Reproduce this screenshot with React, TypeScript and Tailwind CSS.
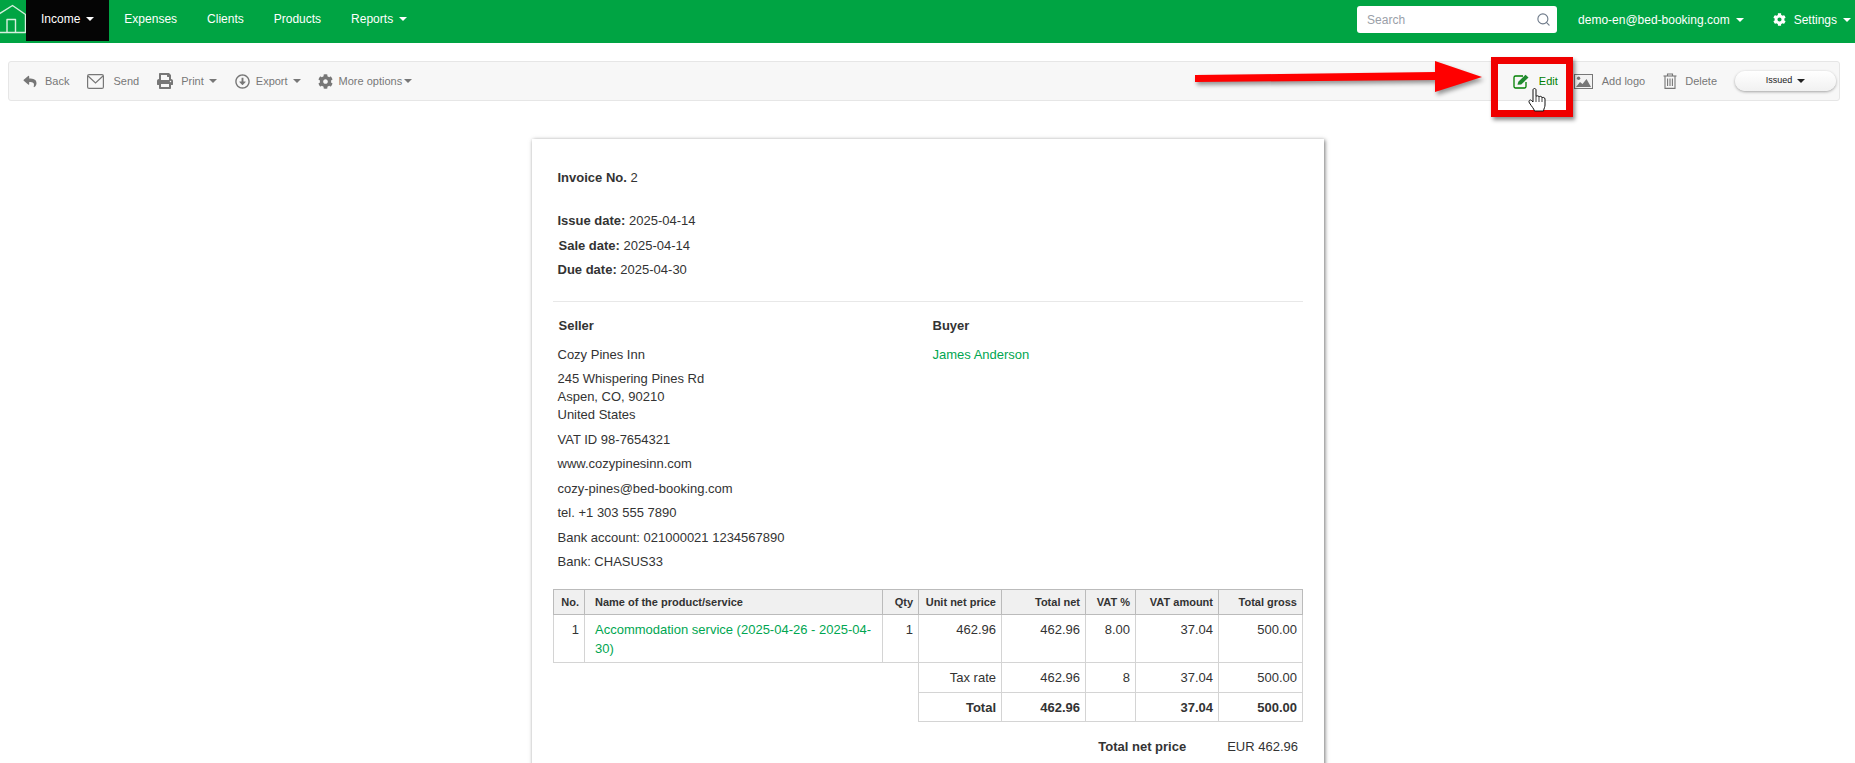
import React from "react";
import { FaReply, FaPrint, FaCog, FaRegArrowAltCircleDown } from "react-icons/fa";
import { Search } from "lucide-react";

function Caret({ className = "" }: { className?: string }) {
  return <span className={`inline-block w-0 h-0 border-x-[4px] border-x-transparent border-t-[4px] ${className}`} />;
}

function HomeIcon() {
  return (
    <svg viewBox="0 0 26 30" className="w-[26px] h-[30px] mt-[4px] shrink-0" fill="none" stroke="#d6f0df" strokeWidth="1.4" strokeLinejoin="round">
      <path d="M-1 10 L12.5 1.5 L25.5 10.5 V28.5 H-1" />
      <path d="M7 28.5 V15.5 H15.5 V28.5" />
    </svg>
  );
}

function NavItem({ label, caret }: { label: string; caret?: boolean }) {
  return (
    <div className="flex items-center h-[37px] px-[15px] text-white">
      <span>{label}</span>
      {caret && <Caret className="ml-[6px] border-t-white" />}
    </div>
  );
}

function EnvelopeIcon() {
  return (
    <svg viewBox="0 0 17 15" className="w-[17px] h-[15px]" fill="none" stroke="#777" strokeWidth="1.2">
      <rect x="0.6" y="0.6" width="15.8" height="13.8" rx="1.5" />
      <path d="M1 2 L8.5 9 L16 2" />
    </svg>
  );
}

function EditIcon() {
  return (
    <svg viewBox="0 0 18 15" className="w-[18px] h-[15px]">
      <path d="M13 8 V12.5 A1.5 1.5 0 0 1 11.5 14 H2.5 A1.5 1.5 0 0 1 1 12.5 V3.5 A1.5 1.5 0 0 1 2.5 2 H10" fill="none" stroke="#008000" strokeWidth="1.3" />
      <path d="M4.5 10.8 L5.3 7.7 L12.5 0.8 L15.5 3.6 L8.2 10.4 Z" fill="#1f8a2e" />
    </svg>
  );
}

function ImageIcon() {
  return (
    <svg viewBox="0 0 19 15" className="w-[19px] h-[15px]">
      <rect x="0.5" y="0.5" width="18" height="14" fill="#f3f3f3" stroke="#777" />
      <circle cx="4.6" cy="4.2" r="1.7" fill="#777" />
      <path d="M2 13 L6 8 L8.5 10 L12.5 5 L17 13 Z" fill="#777" />
    </svg>
  );
}

function TrashIcon() {
  return (
    <svg viewBox="0 0 14 16" className="w-[14px] h-[16px]" fill="none" stroke="#777" strokeWidth="1.1">
      <path d="M0.5 3 H13.5" />
      <path d="M4.5 3 V1 H9.5 V3" />
      <path d="M2 3 V15.4 H12 V3" />
      <path d="M4.6 5.5 V13 M7 5.5 V13 M9.4 5.5 V13" />
    </svg>
  );
}

function Tool({ icon, label, caret, ml, gap }: { icon: React.ReactNode; label: string; caret?: boolean; ml: string; gap: string }) {
  return (
    <div className={`flex items-center ${ml}`}>
      <span className={`flex items-center ${gap}`}>{icon}</span>
      <span>{label}</span>
      {caret && <Caret className={`${label === "More options" ? "ml-[2px]" : "ml-[5px]"} border-t-[#777]`} />}
    </div>
  );
}

const th = "border border-[#bbbbbb] bg-[#f0f0f0] text-[11px] font-bold text-right pl-[5px] pr-[5px] h-[25px] leading-[14px] align-middle whitespace-nowrap";
const td = "border border-[#d4d4d4] text-right pl-[5px] pr-[5px] align-top pt-[5px] leading-[19px]";
const foot = "border border-[#d4d4d4] text-right pl-[5px] pr-[5px] align-middle leading-[19px]";

export default function App() {
  return (
    <div className="relative h-[763px] overflow-hidden bg-white font-['Liberation_Sans',Arial,sans-serif] text-[13px] text-[#333333]">
      <nav className="flex h-[43px] items-start bg-[#00a443] text-[12px]">
        <HomeIcon />
        <div className="bg-[#050505] h-[41px] flex">
          <div className="flex items-center h-[37px] pl-[15px] pr-[15px] text-white">
            <span>Income</span>
            <Caret className="ml-[6px] border-t-white" />
          </div>
        </div>
        <NavItem label="Expenses" />
        <NavItem label="Clients" />
        <NavItem label="Products" />
        <NavItem label="Reports" caret />
        <div className="ml-auto flex items-center h-[39px] text-white">
          <div className="relative w-[200px] h-[27px] bg-white rounded-[3px] flex items-center pl-[10px] text-[12px] text-[#9aa0a8]">
            Search
            <Search size={15} strokeWidth={1.8} className="absolute right-[6px] top-[6px] text-[#6f7b8a]" />
          </div>
          <span className="ml-[21px]">demo-en@bed-booking.com</span>
          <Caret className="ml-[6px] border-t-white" />
          <FaCog className="ml-[29px] w-[13px] h-[13px]" />
          <span className="ml-[8px]">Settings</span>
          <Caret className="ml-[6px] mr-[4px] border-t-white" />
        </div>
      </nav>

      <div className="mx-[8px] mt-[18px] mr-[15px] h-[40px] flex items-center bg-[#f7f7f7] border border-[#e6e6e6] rounded-[3px] text-[11px] text-[#777777]">
        <Tool ml="ml-[14px]" gap="mr-[8px]" icon={<FaReply className="w-[14px] h-[13px]" />} label="Back" />
        <Tool ml="ml-[18px]" gap="mr-[9px]" icon={<EnvelopeIcon />} label="Send" />
        <Tool ml="ml-[18px]" gap="mr-[8px]" icon={<FaPrint className="w-[16px] h-[16px]" />} label="Print" caret />
        <Tool ml="ml-[18px]" gap="mr-[6px]" icon={<FaRegArrowAltCircleDown className="w-[15px] h-[15px]" />} label="Export" caret />
        <Tool ml="ml-[17px]" gap="mr-[6px]" icon={<FaCog className="w-[15px] h-[15px]" />} label="More options" caret />
        <div className="ml-auto flex items-center text-[#008000]">
          <EditIcon />
          <span className="ml-[8px]">Edit</span>
        </div>
        <Tool ml="ml-[16px]" gap="mr-[9px]" icon={<ImageIcon />} label="Add logo" />
        <Tool ml="ml-[18px]" gap="mr-[8px]" icon={<TrashIcon />} label="Delete" />
        <div className="ml-[18px] mr-[3px] w-[101px] h-[20px] rounded-full bg-gradient-to-b from-white to-[#f1f1f1] shadow-[0_1px_3px_rgba(0,0,0,0.35)] flex items-center justify-center text-[9px] text-[#222222]">
          Issued
          <Caret className="ml-[5px] border-t-[#222222]" />
        </div>
      </div>

      <div className="ml-[532px] mt-[38px] w-[792px] min-h-[700px] bg-white px-[21px] pt-[29px] shadow-[1px_1px_4px_rgba(0,0,0,0.55)]">
        <div className="ml-[4.5px] leading-[19px]"><b>Invoice No.</b> 2</div>
        <div className="ml-[4.5px] mt-[22px] leading-[24.5px]">
          <div><b>Issue date:</b> 2025-04-14</div>
          <div className="ml-px"><b>Sale date:</b> 2025-04-14</div>
          <div><b>Due date:</b> 2025-04-30</div>
        </div>
        <div className="mt-[18.5px] h-px bg-[#e8e8e8]" />
        <div className="ml-[4.5px] mt-[13.5px] flex">
          <div className="w-[375px]">
            <div className="ml-px font-bold leading-[20px]">Seller</div>
            <div className="mt-[9px] leading-[20px]">Cozy Pines Inn</div>
            <div className="mt-[5px] leading-[18px]">245 Whispering Pines Rd<br />Aspen, CO, 90210<br />United States</div>
            <div className="mt-[4px] leading-[24.6px]">
              <div>VAT ID 98-7654321</div>
              <div>www.cozypinesinn.com</div>
              <div>cozy-pines@bed-booking.com</div>
              <div>tel. +1 303 555 7890</div>
              <div>Bank account: 021000021 1234567890</div>
              <div>Bank: CHASUS33</div>
            </div>
          </div>
          <div>
            <div className="font-bold leading-[20px]">Buyer</div>
            <div className="mt-[9px] leading-[20px] text-[#00a651]">James Anderson</div>
          </div>
        </div>

        <table className="mt-[14px] table-fixed border-collapse w-[749px]">
          <colgroup>
            <col className="w-[31px]" />
            <col className="w-[298px]" />
            <col className="w-[36px]" />
            <col className="w-[83px]" />
            <col className="w-[84px]" />
            <col className="w-[50px]" />
            <col className="w-[83px]" />
            <col className="w-[84px]" />
          </colgroup>
          <thead>
            <tr>
              <th className={th}>No.</th>
              <th className={`${th} !text-left !pl-[10px]`}>Name of the product/service</th>
              <th className={th}>Qty</th>
              <th className={th}>Unit net price</th>
              <th className={th}>Total net</th>
              <th className={th}>VAT %</th>
              <th className={th}>VAT amount</th>
              <th className={th}>Total gross</th>
            </tr>
          </thead>
          <tbody>
            <tr className="h-[48px]">
              <td className={td}>1</td>
              <td className={`${td} !text-left !pl-[10px] text-[#00a651]`}>Accommodation service (2025-04-26 - 2025-04-30)</td>
              <td className={td}>1</td>
              <td className={td}>462.96</td>
              <td className={td}>462.96</td>
              <td className={td}>8.00</td>
              <td className={td}>37.04</td>
              <td className={td}>500.00</td>
            </tr>
            <tr className="h-[30px]">
              <td colSpan={3} />
              <td className={foot}>Tax rate</td>
              <td className={foot}>462.96</td>
              <td className={foot}>8</td>
              <td className={foot}>37.04</td>
              <td className={foot}>500.00</td>
            </tr>
            <tr className="h-[29px] font-bold">
              <td colSpan={3} />
              <td className={foot}>Total</td>
              <td className={foot}>462.96</td>
              <td className={foot}></td>
              <td className={foot}>37.04</td>
              <td className={foot}>500.00</td>
            </tr>
          </tbody>
        </table>

        <div className="mt-[15px] mr-[5px] flex justify-end leading-[19px]">
          <b>Total net price</b>
          <span className="ml-[41px]">EUR 462.96</span>
        </div>
      </div>

      <svg viewBox="0 0 300 44" className="absolute left-[1190px] top-[56px] w-[300px] h-[44px] drop-shadow-[2px_3px_2px_rgba(0,0,0,0.4)]">
        <path d="M5 19 L245 16 V5 L292 21 L245 36 V24 L5 26 Z" fill="#ff0000" />
      </svg>
      <div className="absolute left-[1491px] top-[57px] w-[82px] h-[60px] border-[7px] border-[#f00000] shadow-[2px_3px_4px_rgba(0,0,0,0.45)]" />
      <svg viewBox="0 0 18 24" className="absolute left-[1528px] top-[88px] w-[18px] h-[24px]">
        <path d="M5 10 V2 C5 0 8 0 8 2 V8.5 C8.5 7.5 11 7.5 11 9 C11.5 8 14 8 14 9.8 C14.5 9 17 9.3 17 11 V17 C17 19 16 20 15.5 23 H6.5 C5.5 20 4 19 1.5 15 C0 13 2 11 3.5 12.5 L5 14 Z" fill="#fff" stroke="#111" strokeWidth="1" strokeLinejoin="round" />
        <path d="M8 8.5 V14 M11 9 V14 M14 9.8 V14" stroke="#111" strokeWidth="0.8" fill="none" />
      </svg>
    </div>
  );
}
